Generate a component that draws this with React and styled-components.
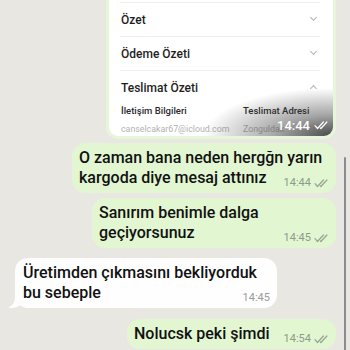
import styled, { createGlobalStyle } from "styled-components";

const GlobalStyle = createGlobalStyle`
  html, body {
    margin: 0;
    padding: 0;
    background: #e9e7e2;
  }
  * {
    box-sizing: border-box;
  }
`;

const Checks = ({ color }) => (
  <svg width="14" height="9" viewBox="0 0 14 9" fill="none">
    <path
      d="M1 4.6l2.5 2.9L9.4 1M6.4 7l.5.5L12.9 1"
      stroke={color}
      strokeWidth="1.2"
      strokeLinecap="round"
      strokeLinejoin="round"
    />
  </svg>
);

export default function App() {
  return (
    <>
      <GlobalStyle />
      <Screen>
        <Row $out>
          <ImageBubble>
            <Card>
              <CardRow $first>
                <RowTitle>Sipariş Detayları</RowTitle>
                <Chevron />
              </CardRow>
              <CardRow>
                <RowTitle>Özet</RowTitle>
                <Chevron />
              </CardRow>
              <CardRow>
                <RowTitle>Ödeme Özeti</RowTitle>
                <Chevron />
              </CardRow>
              <CardRow>
                <RowTitle>Teslimat Özeti</RowTitle>
                <Chevron $up />
              </CardRow>
              <Details>
                <Label>İletişim Bilgileri</Label>
                <Label>Teslimat Adresi</Label>
                <Value>canselcakar67@icloud.com</Value>
                <Value>Zonguldak</Value>
                <Value>Cansel Çakar</Value>
                <Value>Merkez</Value>
              </Details>
              <Shade />
              <PhotoTime>
                14:44
                <Checks color="#ffffff" />
              </PhotoTime>
            </Card>
          </ImageBubble>
        </Row>

        {messages.map((m, i) => (
          <Row key={i} $out={m.out} $gap={m.gap}>
            <Bubble $out={m.out} $width={m.width}>
              <Text>
                {m.text}
                <Meta $out={m.out}>
                  {m.time}
                  {m.out && <Checks color="#97a391" />}
                </Meta>
              </Text>
            </Bubble>
          </Row>
        ))}

        <ScrollThumb />
      </Screen>
    </>
  );
}

const Screen = styled.div`
  position: relative;
  width: 350px;
  height: 350px;
  overflow: hidden;
  display: flex;
  flex-direction: column;
  justify-content: flex-end;
  padding: 0 14px 1px 15px;
  background: #e9e7e2;
  font-family: Roboto, "Liberation Sans", sans-serif;
  color: #111111;
`;

const Row = styled.div`
  display: flex;
  flex-shrink: 0;
  justify-content: ${(p) => (p.$out ? "flex-end" : "flex-start")};
  margin-top: ${(p) => p.$gap || 0}px;
`;

const ImageBubble = styled.div`
  width: 230px;
  padding: 3px;
  border-radius: 12px;
  background: #e6f6d8;
`;

const Card = styled.div`
  position: relative;
  height: 172px;
  overflow: hidden;
  border-radius: 9px;
  background: #ffffff;
`;

const CardRow = styled.div`
  display: flex;
  align-items: center;
  justify-content: space-between;
  flex-shrink: 0;
  height: ${(p) => (p.$first ? 38 : 34)}px;
  margin: 0 13px 0 11px;
  padding: 0 2px 0 1px;
  border-top: ${(p) => (p.$first ? "none" : "1px solid #eeeeee")};
`;

const RowTitle = styled.span`
  font-size: 12px;
  font-weight: 500;
  color: #1e1e1e;
`;

const Chevron = styled.span`
  width: 5px;
  height: 5px;
  margin-right: 2px;
  border-right: 1px solid #b4b4b4;
  border-bottom: 1px solid #b4b4b4;
  transform: translateY(${(p) => (p.$up ? "1px" : "-2px")})
    rotate(${(p) => (p.$up ? "-135deg" : "45deg")});
`;

const Details = styled.div`
  display: grid;
  grid-template-columns: 122px 1fr;
  row-gap: 4px;
  padding: 0 8px 0 12px;
`;

const Label = styled.span`
  font-size: 9.5px;
  line-height: 14px;
  font-weight: 500;
  color: #2a2a2a;
`;

const Value = styled.span`
  font-size: 8.8px;
  line-height: 14px;
  color: #b2b2b2;
`;

const Shade = styled.div`
  position: absolute;
  right: 0;
  bottom: 0;
  width: 130px;
  height: 48px;
  background: radial-gradient(
    ellipse 100% 100% at 100% 100%,
    rgba(40, 40, 40, 0.85) 0%,
    rgba(60, 60, 60, 0.45) 45%,
    rgba(255, 255, 255, 0) 100%
  );
`;

const PhotoTime = styled.span`
  position: absolute;
  right: 5px;
  bottom: 3px;
  display: flex;
  align-items: center;
  gap: 4px;
  font-size: 13px;
  font-weight: 500;
  color: #ffffff;
`;

const Bubble = styled.div`
  position: relative;
  width: ${(p) => (p.$width ? `${p.$width}px` : "auto")};
  padding: 5px ${(p) => (p.$out ? 8 : 7)}px 5px ${(p) => (p.$out ? 7 : 8)}px;
  border-radius: 13px;
  background: ${(p) => (p.$out ? "#e2f6d2" : "#fefefe")};

  ${(p) =>
    !p.$out &&
    `
    &::before {
      content: "";
      position: absolute;
      left: -6px;
      bottom: 0;
      width: 16px;
      height: 16px;
      background: #fefefe;
      border-bottom-right-radius: 14px 12px;
    }
    &::after {
      content: "";
      position: absolute;
      left: -10px;
      bottom: 0;
      width: 10px;
      height: 18px;
      background: #e9e7e2;
      border-bottom-right-radius: 10px;
    }
  `}
`;

const Text = styled.div`
  position: relative;
  z-index: 1;
  font-size: 16px;
  line-height: 20px;
  font-weight: 500;
  color: #111111;
`;

const Meta = styled.span`
  float: right;
  position: relative;
  top: 5px;
  display: inline-flex;
  align-items: center;
  gap: 3px;
  margin-left: 14px;
  font-size: 11px;
  line-height: 20px;
  font-weight: 400;
  color: ${(p) => (p.$out ? "#8f9a8b" : "#9a9a9a")};
`;

const ScrollThumb = styled.div`
  position: absolute;
  right: 4px;
  top: 157px;
  width: 2px;
  height: 200px;
  border-radius: 1px;
  background: #8c8c8c;
`;

const messages = [
  {
    out: true,
    gap: 4,
    width: 264,
    text: "O zaman bana neden hergğn yarın kargoda diye mesaj attınız",
    time: "14:44",
  },
  {
    out: true,
    gap: 5,
    width: 244,
    text: "Sanırım benimle dalga geçiyorsunuz",
    time: "14:45",
  },
  {
    out: false,
    gap: 10,
    width: 262,
    text: "Üretimden çıkmasını bekliyorduk bu sebeple",
    time: "14:45",
  },
  {
    out: true,
    gap: 11,
    text: "Nolucsk peki şimdi",
    time: "14:54",
  },
];
